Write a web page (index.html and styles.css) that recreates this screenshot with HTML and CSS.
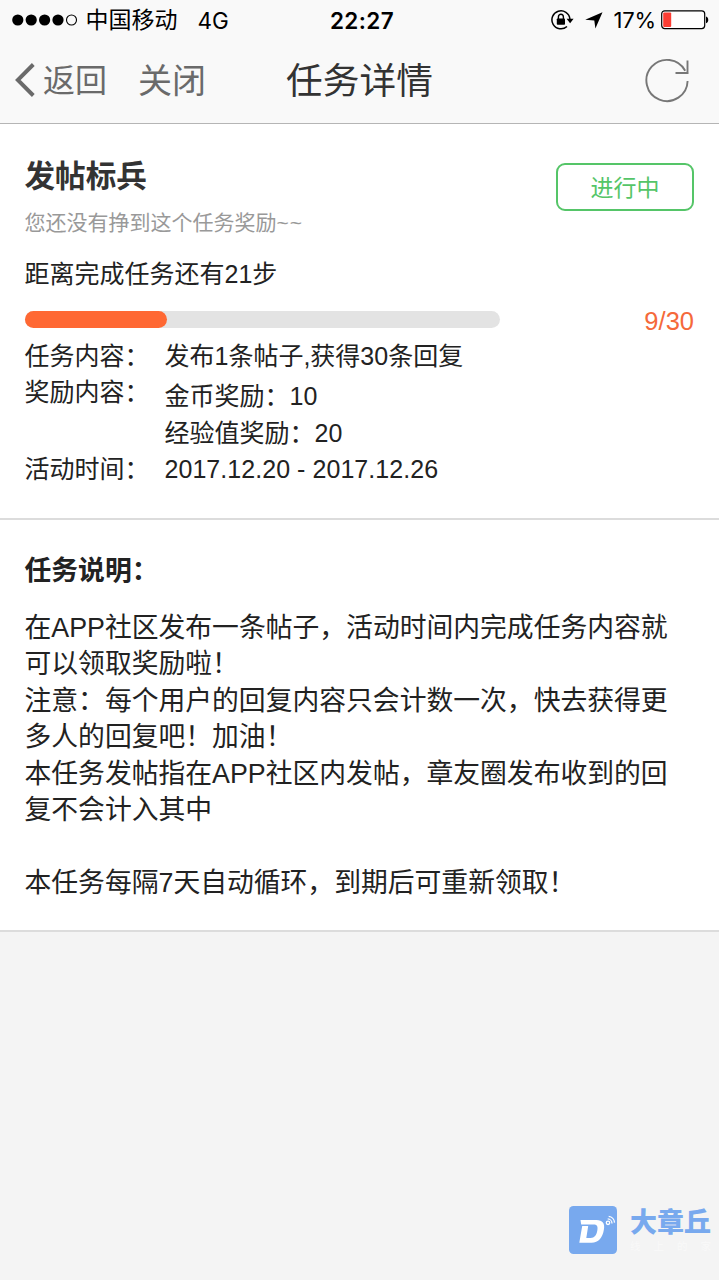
FILE: index.html
```html
<!DOCTYPE html>
<html lang="zh-CN">
<head>
<meta charset="utf-8">
<title>任务详情</title>
<link rel="stylesheet" href="styles.css">
</head>
<body>
<div class="screen">
  <header class="top">
    <div class="status">
      <div class="status-left">
        <svg class="signal" width="66" height="12" viewBox="0 0 66 12"><circle cx="5.8" cy="6" r="5.6"/><circle cx="19.2" cy="6" r="5.6"/><circle cx="32.6" cy="6" r="5.6"/><circle cx="46" cy="6" r="5.6"/><circle cx="59.5" cy="6" r="5" fill="none" stroke="#000" stroke-width="1.1"/></svg>
        <span class="carrier">中国移动</span>
        <span class="network">4G</span>
      </div>
      <span class="clock">22:27</span>
      <div class="status-right">
        <svg class="lock" width="23" height="20" viewBox="0 0 23 20"><path d="M16 16.5A9 9 0 1 1 18.9 9" fill="none" stroke="#000" stroke-width="1.5"/><path d="M15.6 8.8h7l-3.5 4.4z"/><rect x="5.8" y="8.5" width="8.2" height="6.2" rx=".8"/><path d="M7.4 9V7a2.5 2.8 0 0 1 5 0v2" fill="none" stroke="#000" stroke-width="1.4"/></svg>
        <svg class="arrow" width="18" height="17" viewBox="0 0 18 17"><path d="M17.500.2L10.400 16.600 9.300 8.600.2 7.800z"/></svg>
        <span class="percent">17%</span>
        <svg class="battery" width="48" height="20" viewBox="0 0 48 20"><rect x=".7" y=".8" width="43" height="17.8" rx="3" fill="#fff" stroke="#000" stroke-width="1.2"/><rect x="2.2" y="2.4" width="8" height="14.6" rx="1" fill="#fc3d33"/><path d="M45 6.4c3 .8 3 5.8 0 6.8z"/></svg>
      </div>
    </div>
    <nav class="nav">
      <div class="nav-left">
        <svg class="chevron" width="20" height="34" viewBox="0 0 20 34"><path d="M18.300 1.500L2.800 17 18.300 32.500" fill="none" stroke="#6a6a6a" stroke-width="3.9"/></svg>
        <span class="back">返回</span>
        <span class="close">关闭</span>
      </div>
      <h1 class="nav-title">任务详情</h1>
      <svg class="refresh" width="46" height="46" viewBox="0 0 46 46"><path d="M42.6 24A20.6 20.6 0 1 1 40.2 13.8M42.500 3.500V16M30.500 16H43.500" fill="none" stroke="#777" stroke-width="1.9"/></svg>
    </nav>
  </header>

  <section class="task">
    <div class="task-head">
      <div>
        <h2 class="task-name">发帖标兵</h2>
        <p class="task-hint">您还没有挣到这个任务奖励<span class="tilde">~~</span></p>
      </div>
      <span class="badge">进行中</span>
    </div>
    <p class="remain">距离完成任务还有21步</p>
    <div class="progress">
      <div class="track"><div class="fill" style="width:30%"></div></div>
      <span class="count">9/30</span>
    </div>
    <dl class="info">
      <dt>任务内容：</dt>
      <dd>发布1条帖子,获得30条回复</dd>
      <dt>奖励内容：</dt>
      <dd class="rewards"><div>金币奖励：10</div><div>经验值奖励：20</div></dd>
      <dt>活动时间：</dt>
      <dd class="period">2017.12.20 - 2017.12.26</dd>
    </dl>
  </section>

  <section class="explain">
    <h3 class="explain-title">任务说明：</h3>
    <p class="explain-text">在APP社区发布一条帖子，活动时间内完成任务内容就<br>可以领取奖励啦！<br>注意：每个用户的回复内容只会计数一次，快去获得更<br>多人的回复吧！加油！<br>本任务发帖指在APP社区内发帖，章友圈发布收到的回<br>复不会计入其中<br><br>本任务每隔7天自动循环，到期后可重新领取！</p>
  </section>

  <footer class="brand">
    <svg class="brand-icon" width="48" height="48" viewBox="0 0 48 48"><rect width="48" height="48" rx="4.5" fill="#78a9ee"/><path fill="#fff" d="M11.500 14H27.500C33.500 14 36.100 17.400 34.900 23.600 33.600 32 29.500 36.700 22.500 36.700H10.300L13.200 20H19.200L17.300 32H21.700C25.400 32 27.500 29.400 28.300 24.600 29.100 20.200 27.900 18.600 24.400 18.600H12.200z"/><g fill="none" stroke="#fff" stroke-width="1.3"><circle cx="39" cy="16.800" r="1.700"/><path d="M38.700 12.900a4.500 4.500 0 0 1 4.300 4.600M39.700 10.400a6.500 6.500 0 0 1 5.800 6.200"/></g></svg>
    <div class="brand-words">
      <span class="brand-name">大章丘</span>
      <div class="brand-slogan"><span>线</span><span>上</span><span>的</span><span>家</span></div>
    </div>
  </footer>
</div>
</body>
</html>
```
FILE: styles.css
```css
* { box-sizing: border-box; }
body, h1, h2, h3, p, dl, dd { margin: 0; }
body {
  background: #f4f4f4;
  color: #222;
  font-family: "Liberation Sans", "Noto Sans CJK SC", sans-serif;
}
svg { display: block; flex: none; }
.screen { width: 719px; height: 1280px; display: flex; flex-direction: column; overflow: hidden; white-space: nowrap; }

.top { height: 124px; background: #f9f9f9; border-bottom: 1px solid #b5b5b5; }
.status { display: grid; grid-template-columns: 1fr auto 1fr; align-items: center; height: 40px; padding: 0 10px 0 12px; color: #000; font-family: Inter, "Noto Sans CJK SC", sans-serif; }
.status-left, .status-right { display: flex; align-items: center; }
.status-right { justify-content: flex-end; }
.carrier { margin-left: 7.500px; font-size: 23px; line-height: 40px; }
.network { margin-left: 20px; font-size: 22.500px; }
.clock { padding-left: 3px; font-size: 22.500px; font-weight: 600; letter-spacing: .4px; }
.arrow { margin-left: 11px; }
.percent { margin: 0 5px 0 11px; font-size: 22px; letter-spacing: -.2px; }

.nav { display: grid; grid-template-columns: 1fr auto 1fr; align-items: center; height: 80px; padding: 0 28px 0 15px; color: #6a6a6a; }
.nav-left { display: flex; align-items: center; }
.back { margin-left: 8px; padding-top: 1px; font-size: 32px; line-height: 48px; }
.close { margin-left: 31px; padding-top: 2px; font-size: 34px; line-height: 48px; }
.nav-title { padding: 4px 0 0 13px; color: #333; font-size: 36.700px; font-weight: 400; line-height: 48px; }
.refresh { justify-self: end; }

.task { height: 396px; padding: 29px 25px 0 24.500px; background: #fff; border-bottom: 2px solid #dcdcdc; }
.task-head { display: flex; justify-content: space-between; align-items: flex-start; }
.task-name { color: #333; font-size: 30.600px; font-weight: 700; line-height: 46px; }
.task-hint { padding-top: 1px; color: #999; font-size: 21px; line-height: 46px; }
.tilde { letter-spacing: .9px; }
.badge { width: 138px; height: 48px; margin-top: 10px; border: 2px solid #55c568; border-radius: 9px; color: #55c568; font-size: 23px; line-height: 46px; text-align: center; }
.remain { padding-top: 5px; font-size: 25px; line-height: 46px; }
.progress { display: flex; justify-content: space-between; align-items: center; height: 42px; padding-top: 2px; }
.track { width: 475.500px; height: 17px; border-radius: 9px; background: #e3e3e3; }
.fill { height: 100%; border-radius: 9px; background: #ff6833; }
.count { padding-top: 4px; color: #f5693a; font-size: 25.500px; line-height: 36px; }
.info { display: grid; grid-template-columns: 140px 1fr; margin-top: -1px; font-size: 25px; line-height: 36.300px; }
.rewards { padding-top: 4px; }
.period { letter-spacing: .05px; }

.explain { height: 412px; padding: 31px 25px 0 24.500px; background: #fff; border-bottom: 2px solid #dcdcdc; }
.explain-title { font-size: 26.800px; font-weight: 600; line-height: 40px; }
.explain-text { margin-top: 19px; font-size: 26.800px; line-height: 36.450px; }

.brand { display: flex; margin-top: auto; padding: 0 8px 26px; justify-content: flex-end; gap: 13px; }
.brand-words { display: flex; flex-direction: column; height: 48px; }
.brand-name { color: #78a9ee; font-size: 27px; font-weight: 900; line-height: 34px; }
.brand-slogan { display: flex; justify-content: space-between; color: #f9f9f9; font-size: 10.500px; line-height: 13px; }
```
